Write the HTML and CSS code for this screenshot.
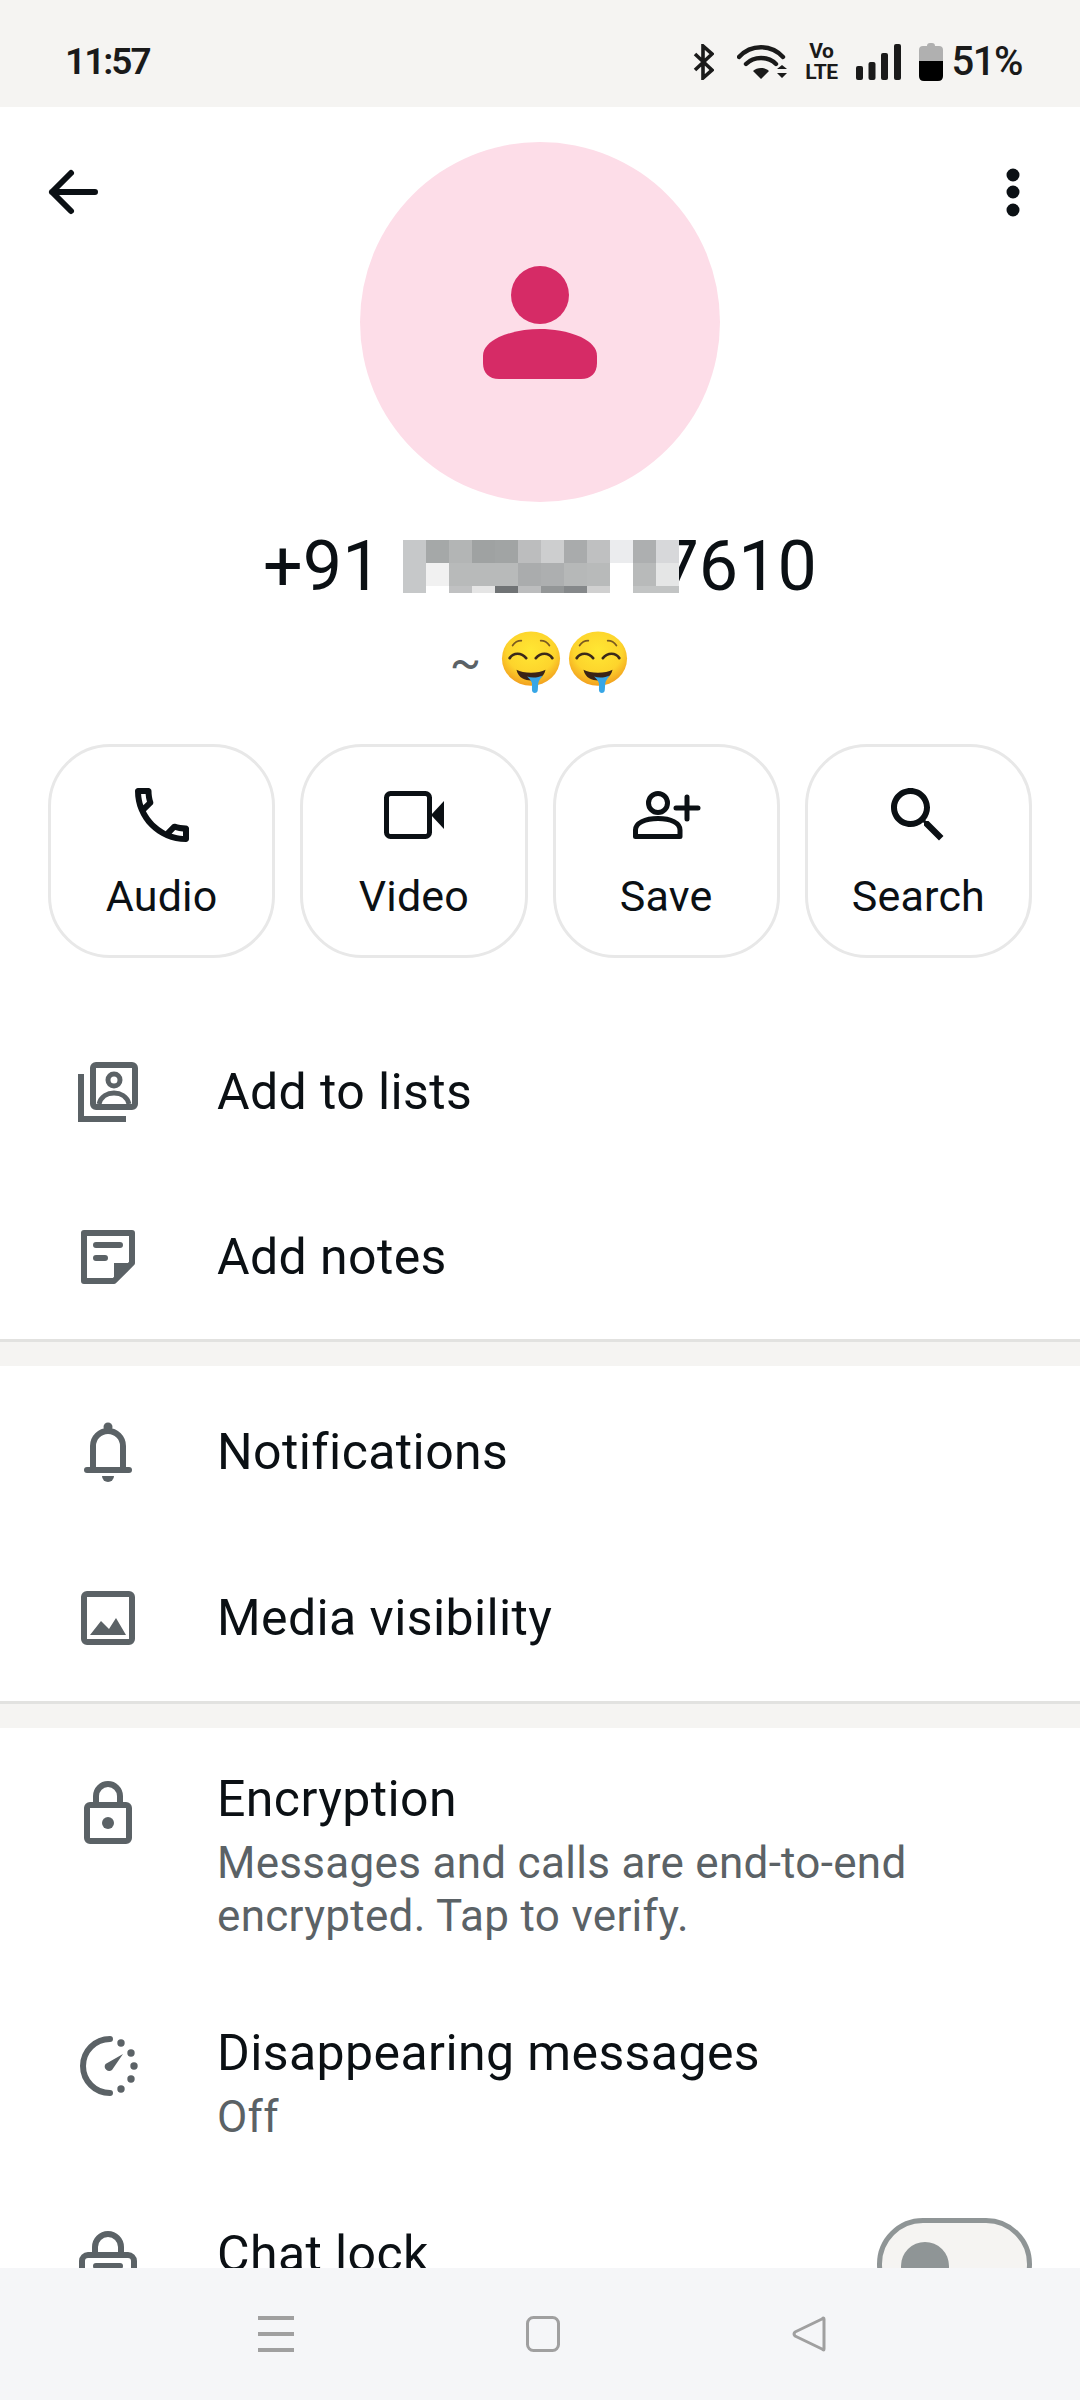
FILE: index.html
```html
<!DOCTYPE html>
<html lang="en">
<head>
  <meta charset="UTF-8">
  <title>Contact info</title>
  <link rel="stylesheet" href="styles.css">
</head>
<body>

  <svg class="defs" width="0" height="0">
    <defs>
      <radialGradient id="face" cx="50%" cy="36%" r="64%">
        <stop offset="0" stop-color="#ffe733"/>
        <stop offset="0.65" stop-color="#fdd42c"/>
        <stop offset="1" stop-color="#f2a01f"/>
      </radialGradient>
      <symbol id="drool" viewBox="0 0 64 64">
        <ellipse cx="32" cy="28.500" rx="30" ry="28" fill="url(#face)"/>
        <path d="M13 15 C15 12 19 10 22 10 M42 10 C45 10 49 12 51 15" fill="none" stroke="#7a5a20" stroke-width="1.800" stroke-linecap="round"/>
        <path d="M10 28 C14 22 22 22 27 28 M37 28 C42 22 50 22 54 28" fill="none" stroke="#3b2a1a" stroke-width="2.800" stroke-linecap="round"/>
        <path d="M17 40 C24 44 40 44 47 40 C45 49 38 51 32 51 C26 51 19 49 17 40Z" fill="#3a2316"/>
        <path d="M28 47 C33 49 40 48 44 46 C42 49 40 51 39.500 54 L39 61 C39 65 33 65 33 61 L33 54 C32 51 30 49 28 47Z" fill="#37a6e6"/>
      </symbol>
    </defs>
  </svg>

  <div class="status">
    <span class="clock">11:57</span>
    <div class="status-icons">
      <svg class="bt" width="21" height="36" viewBox="0 0 21 36"><path d="M2 10 L19 26 L10 34 V2 L19 10 L2 26" fill="none" stroke="#1a1a1a" stroke-width="3.600"/></svg>
      <svg width="50" height="34" viewBox="0 0 50 34">
        <path d="M2 12 C14 -1 34 -1 46 12 M9 19 C17 11 31 11 39 19" fill="none" stroke="#1a1a1a" stroke-width="4.400" stroke-linecap="round"/>
        <path d="M24 34 L16 26 C20 22 28 22 32 26Z M40 24 L45 20 L50 24Z M40 28 H50 L45 33Z" fill="#1a1a1a"/>
      </svg>
      <div class="volte"><span>Vo</span><span>LTE</span></div>
      <svg width="45" height="36" viewBox="0 0 45 36" fill="#1a1a1a">
        <rect x="0" y="22" width="7" height="14" rx="2"/>
        <rect x="12.500" y="18" width="7" height="18" rx="2"/>
        <rect x="25" y="9" width="7" height="27" rx="2"/>
        <rect x="38" y="0" width="7" height="36" rx="2"/>
      </svg>
      <svg width="24" height="38" viewBox="0 0 24 38">
        <path d="M8 3 Q8 0 11 0 H13 Q16 0 16 3 H20 Q24 3 24 7 V18 H0 V7 Q0 3 4 3Z" fill="#b0b0b0"/>
        <path d="M0 18 H24 V33 Q24 38 19 38 H5 Q0 38 0 33Z" fill="#000"/>
      </svg>
      <span class="battery">51%</span>
    </div>
  </div>

  <main>
    <div class="top">
      <svg class="icon back" viewBox="0 0 72 72"><path d="M59 36 H16 M35 17 L16 36 L35 55" fill="none" stroke="#0b1014" stroke-width="6" stroke-linecap="round" stroke-linejoin="round"/></svg>
      <div class="avatar">
        <svg width="114" height="113" viewBox="0 0 114 113" fill="#d62b66">
          <circle cx="57" cy="29" r="29"/>
          <path d="M0 97 V90 C0 82 6 76 16 71 C30 65 44 63 57 63 C70 63 84 65 98 71 C108 76 114 82 114 90 V97 C114 107 108 113 98 113 H16 C6 113 0 107 0 97Z"/>
        </svg>
      </div>
      <svg class="icon more" viewBox="0 0 72 72" fill="#0b1014"><circle cx="36" cy="19" r="6.500"/><circle cx="36" cy="36" r="6.500"/><circle cx="36" cy="54" r="6.500"/></svg>
    </div>

    <div class="name">
      <span>+91</span>
      <svg class="redact" width="276" height="53" viewBox="0 0 276 53" shape-rendering="crispEdges">
        <g>
          <rect x="0" y="0" width="23" height="53" fill="#c6c8c9"/>
          <rect x="23" y="0" width="23" height="23" fill="#a5a8a8"/>
          <rect x="46" y="0" width="23" height="23" fill="#b3b5b5"/>
          <rect x="69" y="0" width="23" height="23" fill="#9fa2a2"/>
          <rect x="92" y="0" width="23" height="23" fill="#a1a4a4"/>
          <rect x="115" y="0" width="23" height="23" fill="#bcbdbe"/>
          <rect x="138" y="0" width="23" height="23" fill="#cdcecf"/>
          <rect x="161" y="0" width="23" height="23" fill="#a9abac"/>
          <rect x="184" y="0" width="23" height="23" fill="#bfc0c1"/>
          <rect x="207" y="0" width="23" height="23" fill="#ebecee"/>
          <rect x="230" y="0" width="23" height="23" fill="#adafb0"/>
          <rect x="253" y="0" width="23" height="23" fill="#d7d8da"/>
        </g>
        <g>
          <rect x="23" y="23" width="23" height="23" fill="#f1f1f1"/>
          <rect x="46" y="23" width="69" height="23" fill="#b8baba"/>
          <rect x="115" y="23" width="23" height="23" fill="#aaacad"/>
          <rect x="138" y="23" width="23" height="23" fill="#adafb0"/>
          <rect x="161" y="23" width="23" height="23" fill="#b6b8b8"/>
          <rect x="184" y="23" width="23" height="23" fill="#b8baba"/>
          <rect x="207" y="23" width="23" height="30" fill="#fff"/>
          <rect x="230" y="23" width="23" height="23" fill="#b8baba"/>
          <rect x="253" y="23" width="23" height="23" fill="#e5e6e6"/>
        </g>
        <g>
          <rect x="23" y="46" width="23" height="7" fill="#fff"/>
          <rect x="46" y="46" width="23" height="7" fill="#c0c1c2"/>
          <rect x="69" y="46" width="23" height="7" fill="#e5e5e5"/>
          <rect x="92" y="46" width="23" height="7" fill="#707375"/>
          <rect x="115" y="46" width="23" height="7" fill="#bcbdbe"/>
          <rect x="138" y="46" width="23" height="7" fill="#939697"/>
          <rect x="161" y="46" width="23" height="7" fill="#85888a"/>
          <rect x="184" y="46" width="23" height="7" fill="#d0d0d0"/>
          <rect x="230" y="46" width="46" height="7" fill="#c2c4c4"/>
        </g>
      </svg>
      <span>7610</span>
    </div>

    <div class="about">
      <span class="tilde">~</span>
      <svg class="emoji" viewBox="0 0 64 64"><use href="#drool"/></svg>
      <svg class="emoji" viewBox="0 0 64 64"><use href="#drool"/></svg>
    </div>

    <div class="actions">
      <div class="action">
        <svg class="icon" viewBox="0 0 24 24" fill="#0b1014"><path d="M6.540 5c.06.89.21 1.760.45 2.590l-1.200 1.200c-.41-1.200-.67-2.470-.76-3.790h1.510m9.860 12.020c.85.24 1.720.39 2.600.45v1.490c-1.320-.09-2.590-.35-3.800-.75l1.200-1.190M7.500 3H4c-.55 0-1 .45-1 1 0 9.390 7.610 17 17 17 .55 0 1-.45 1-1v-3.490c0-.55-.45-1-1-1-1.240 0-2.450-.2-3.570-.57-.1-.04-.21-.05-.31-.05-.26 0-.51.1-.71.29l-2.200 2.200c-2.830-1.450-5.150-3.760-6.590-6.590l2.200-2.200c.28-.28.36-.67.25-1.020C8.700 6.450 8.500 5.250 8.500 4c0-.55-.45-1-1-1z"/></svg>
        <span>Audio</span>
      </div>
      <div class="action">
        <svg class="icon" viewBox="-6 -12 72 72">
          <rect x="2.500" y="2.500" width="43" height="43" rx="4" fill="none" stroke="#0b1014" stroke-width="5"/>
          <path d="M47 24 L60 10 V38Z" fill="#0b1014"/>
        </svg>
        <span>Video</span>
      </div>
      <div class="action">
        <svg class="icon" viewBox="-3 -12 72 72">
          <circle cx="25" cy="12" r="9.500" fill="none" stroke="#0b1014" stroke-width="5"/>
          <path d="M2.500 45.500 V39 C2.500 32 12 27.500 25 27.500 C38 27.500 47 32 47 39 V45.500Z" fill="none" stroke="#0b1014" stroke-width="5" stroke-linejoin="round"/>
          <path d="M54 6 V28 M43 17 H65" fill="none" stroke="#0b1014" stroke-width="5" stroke-linecap="round"/>
        </svg>
        <span>Save</span>
      </div>
      <div class="action">
        <svg class="icon" viewBox="0 0 24 24" fill="#0b1014"><path d="M15.500 14h-.79l-.28-.27C15.410 12.590 16 11.110 16 9.500 16 5.910 13.090 3 9.500 3S3 5.910 3 9.500 5.910 16 9.500 16c1.610 0 3.090-.59 4.230-1.570l.27.28v.79l5 4.990L20.490 19l-4.990-5zm-6 0C7.010 14 5 11.990 5 9.500S7.010 5 9.500 5 14 7.010 14 9.500 11.990 14 9.500 14z"/></svg>
        <span>Search</span>
      </div>
    </div>

    <section class="group first">
      <div class="row">
        <svg class="icon line" viewBox="0 0 72 72">
          <rect x="21" y="9" width="42" height="42" rx="3"/>
          <path d="M9 18 V63 H54"/>
          <circle cx="42" cy="24" r="6" stroke-width="5"/>
          <path d="M27 48 C29 40 36 37 42 37 C48 37 55 40 57 48" stroke-width="5"/>
        </svg>
        <div class="title">Add to lists</div>
      </div>
      <div class="row">
        <svg class="icon line" viewBox="0 0 72 72">
          <path d="M12 12 H60 V42 L42 60 H12Z" stroke-linejoin="round"/>
          <path d="M42 60 V42 H60Z" class="solid"/>
          <path d="M24 24 H48 M24 37 H33" stroke-linecap="round"/>
        </svg>
        <div class="title">Add notes</div>
      </div>
    </section>

    <section class="group tall">
      <div class="row">
        <svg class="icon line" viewBox="0 0 72 72">
          <path d="M21 54 V30 a15 15 0 0 1 30 0 V54"/>
          <path d="M15 54 H57" stroke-linecap="round"/>
          <circle cx="36" cy="11" r="4.500" class="solid"/>
          <path d="M30 60 h12 a6 6 0 0 1 -12 0Z" class="solid"/>
        </svg>
        <div class="title">Notifications</div>
      </div>
      <div class="row">
        <svg class="icon line" viewBox="0 0 72 72">
          <rect x="12" y="12" width="48" height="48" rx="3"/>
          <path d="M18 53 L29 39 L37 47 L44 36 L54 53Z" class="solid"/>
        </svg>
        <div class="title">Media visibility</div>
      </div>
    </section>

    <section class="group last">
      <div class="row row-text">
        <svg class="icon line" viewBox="0 0 72 72">
          <rect x="15" y="29" width="42" height="36" rx="3"/>
          <path d="M24 29 V20 a12 12 0 0 1 24 0 V29"/>
          <circle cx="36" cy="47" r="6" class="solid"/>
        </svg>
        <div>
          <div class="title">Encryption</div>
          <div class="sub">Messages and calls are end-to-end encrypted. Tap to verify.</div>
        </div>
      </div>
      <div class="row row-text">
        <svg class="icon line" viewBox="0 0 72 72">
          <path d="M38 9 A27 27 0 0 0 38 63" stroke-linecap="round"/>
          <g class="solid">
            <circle cx="49" cy="13" r="3.700"/><circle cx="59" cy="23" r="3.700"/><circle cx="62" cy="36" r="3.700"/><circle cx="59" cy="49" r="3.700"/><circle cx="49" cy="59" r="3.700"/>
            <path d="M51 24 L40 40 a4.500 4.500 0 0 1 -6.500 -6Z"/>
          </g>
        </svg>
        <div>
          <div class="title">Disappearing messages</div>
          <div class="sub">Off</div>
        </div>
      </div>
      <div class="row row-text">
        <svg class="icon line" viewBox="0 0 72 72">
          <rect x="10" y="24" width="52" height="40" rx="6"/>
          <path d="M23 24 V16 a13 13 0 0 1 26 0 V24"/>
          <path d="M24 35 H48" stroke-linecap="round"/>
        </svg>
        <div class="title">Chat lock</div>
        <div class="toggle"><div class="thumb"></div></div>
      </div>
    </section>
  </main>

  <nav class="navbar">
    <svg width="36" height="36" viewBox="0 0 36 36"><path d="M0 2 H36 M0 18 H36 M0 34 H36" stroke="#a0a0a0" stroke-width="4"/></svg>
    <svg width="34" height="36" viewBox="0 0 34 36"><rect x="1.500" y="1.500" width="31" height="33" rx="6" fill="none" stroke="#a0a0a0" stroke-width="3"/></svg>
    <svg width="34" height="36" viewBox="0 0 34 36"><path d="M32 3 V33 Q32 35 30 33 L3 20 Q1 18 3 16 L30 3 Q32 1 32 3Z" fill="none" stroke="#a0a0a0" stroke-width="3" stroke-linejoin="round"/></svg>
  </nav>

</body>
</html>
```

FILE: styles.css
```css
body {
  margin: 0;
  width: 1080px;
  height: 2400px;
  overflow: hidden;
  display: flex;
  flex-direction: column;
  font-family: Roboto, "Liberation Sans", sans-serif;
  color: #0b1014;
  background-color: #fff;
}

.defs {
  position: absolute;
}

.status {
  flex: none;
  height: 107px;
  box-sizing: border-box;
  padding: 16px 58px 0 65px;
  display: flex;
  align-items: center;
  justify-content: space-between;
  background-color: #f5f4f2;
  color: #1a1a1a;
}

.clock {
  font-size: 37px;
  font-weight: 600;
  letter-spacing: -2px;
}

.status-icons {
  display: flex;
  align-items: center;
  gap: 18px;
}

.bt {
  margin-right: 5px;
}

.volte {
  display: flex;
  flex-direction: column;
  align-items: center;
  font-size: 21px;
  font-weight: 700;
  line-height: 21px;
  letter-spacing: -0.5px;
}

.battery {
  margin-left: -9px;
  font-size: 40px;
  font-weight: 500;
  letter-spacing: -1.5px;
}

main {
  flex: 1;
  min-height: 0;
  overflow: hidden;
}

.icon {
  flex: none;
  width: 72px;
  height: 72px;
}

.line {
  fill: none;
  stroke: #5b6266;
  stroke-width: 6;
}

.line .solid {
  fill: #5b6266;
  stroke: none;
}

.top {
  padding-top: 35px;
  display: grid;
  grid-template-columns: 1fr 360px 1fr;
  align-items: start;
}

.back {
  margin: 14px 0 0 36px;
}

.more {
  margin: 14px 31px 0 0;
  justify-self: end;
}

.avatar {
  height: 360px;
  border-radius: 50%;
  background-color: #fddde8;
  display: flex;
  align-items: center;
  justify-content: center;
}

.name {
  margin-top: 28px;
  height: 72px;
  display: flex;
  align-items: center;
  justify-content: center;
  gap: 21px;
  font-size: 70px;
  line-height: 72px;
}

.redact {
  position: relative;
  margin-right: -40px;
  z-index: 1;
}

.about {
  margin-top: 30px;
  height: 60px;
  display: flex;
  align-items: center;
  justify-content: center;
  gap: 3px;
}

.tilde {
  margin-right: 15px;
  font-size: 46px;
  color: #5b6266;
}

.emoji {
  width: 64px;
  height: 62px;
}

.actions {
  margin-top: 52px;
  padding: 0 48px;
  display: grid;
  grid-template-columns: repeat(4, 1fr);
  gap: 25px;
}

.action {
  height: 214px;
  box-sizing: border-box;
  padding-top: 32px;
  border: 3px solid #e8e8e8;
  border-radius: 62px;
  display: flex;
  flex-direction: column;
  align-items: center;
  gap: 20px;
  font-size: 43px;
  line-height: 50px;
  letter-spacing: 0.2px;
}

.group {
  border-bottom: 3px solid #e2e2e0;
}

.group.first {
  margin-top: 51px;
}

.group.last {
  border-bottom: none;
}

.group + .group {
  border-top: 24px solid #f5f4f2;
}

.row {
  display: flex;
  align-items: center;
  gap: 73px;
  height: 165px;
  padding: 0 48px 0 72px;
}

.tall {
  padding-top: 3px;
}

.tall .row {
  height: 166px;
}

.title {
  font-size: 50px;
  line-height: 54px;
  letter-spacing: 0.4px;
}

.sub {
  margin-top: 11px;
  width: 760px;
  font-size: 44px;
  line-height: 53px;
  letter-spacing: 0.3px;
  color: #5b6266;
}

.row-text {
  height: auto;
  align-items: flex-start;
  padding-top: 44px;
  padding-bottom: 39px;
}

.row-text .icon {
  margin-top: 4px;
}

.toggle {
  flex: none;
  margin: -9px 0 0 auto;
  width: 155px;
  height: 92px;
  box-sizing: border-box;
  border: 5px solid #8f9596;
  border-radius: 46px;
  padding: 19px 0 0 19px;
  background-color: #f5f4f2;
}

.thumb {
  width: 48px;
  height: 48px;
  border-radius: 50%;
  background-color: #8f9596;
}

.navbar {
  flex: none;
  height: 132px;
  padding-left: 258px;
  display: flex;
  align-items: center;
  gap: 232px;
  background-color: #f5f6f8;
}
```
